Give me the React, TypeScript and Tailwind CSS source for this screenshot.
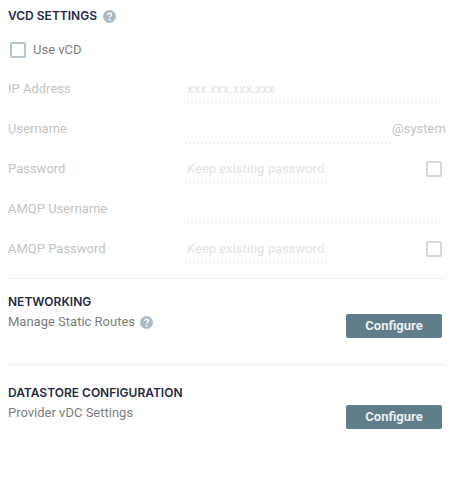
function Help() {
  return (
    <svg width="13" height="13" viewBox="0 0 13 13" className="shrink-0">
      <circle cx="6.5" cy="6.5" r="6.5" fill="#a9bcc6" />
      <path d="M4.6 5.1c0-1.1.8-1.8 1.9-1.8s1.9.7 1.9 1.6c0 1.400-1.800 1.400-1.800 2.700" fill="none" stroke="#fff" strokeWidth="1.4" />
      <circle cx="6.600" cy="9.700" r="0.900" fill="#fff" />
    </svg>
  );
}

function Row({ label, placeholder, inputW, check, suffix }: { label: string; placeholder?: string; inputW: string; check?: boolean; suffix?: string }) {
  return (
    <div className="flex h-10 items-start">
      <div className="w-[176px] pt-[7px] text-[13px] leading-[18px] text-[#c4c4c4]">{label}</div>
      <div className={`${inputW} h-[30px] bg-[linear-gradient(to_right,#c8c8c8_1px,transparent_1px)] bg-[length:4px_1px] bg-bottom bg-repeat-x pl-[3px] pt-[7px] text-[13px] leading-[18px] text-[#e4e4e4]`}>{placeholder}</div>
      {suffix && <div className="pl-[2px] pt-[7px] text-[13px] leading-[18px] text-[#c4c4c4]">{suffix}</div>}
      {check && <div className="ml-auto mr-[4px] mt-[8px] h-4 w-4 rounded-[2px] border-2 border-[#d8d8d8]" />}
    </div>
  );
}

function Section({ title, text, help }: { title: string; text: string; help?: boolean }) {
  return (
    <div className="flex items-start justify-between pr-[4px]">
      <div>
        <div className="text-[12px] leading-[18px] font-semibold text-[#252a41] font-['Inter',sans-serif]">{title}</div>
        <div className="mt-[2px] flex items-center gap-[5px] text-[13px] leading-[18px] text-[#7d7d7d]">
          {text}
          {help && <Help />}
        </div>
      </div>
      <button className="mt-[21px] h-6 w-24 rounded-[2px] bg-[#607d8b] text-[13px] font-bold text-[#eceff1]">Configure</button>
    </div>
  );
}

export default function App() {
  return (
    <div className="h-[494px] w-[454px] bg-white px-2 pt-[7px] font-['Roboto',sans-serif]">
      <div className="flex items-center gap-[6px] text-[12px] leading-[18px] font-semibold text-[#252a41] font-['Inter',sans-serif]">
        VCD SETTINGS <Help />
      </div>
      <div className="mt-[17px] flex h-4 items-center pl-[2px]">
        <div className="h-4 w-4 rounded-[2px] border-2 border-[#b4c6cf]" />
        <span className="ml-[7px] text-[13px] text-[#7d7d7d]">Use vCD</span>
      </div>
      <div className="mt-[15px]">
        <Row label="IP Address" placeholder="xxx.xxx.xxx.xxx" inputW="w-[259px]" />
        <Row label="Username" inputW="w-[206px]" suffix="@system" />
        <Row label="Password" placeholder="Keep existing password" inputW="w-[143px]" check />
        <Row label="AMQP Username" inputW="w-[259px]" />
        <Row label="AMQP Password" placeholder="Keep existing password" inputW="w-[143px]" check />
      </div>
      <div className="mt-[5px] border-t border-[#ebebeb] pt-[14px]">
        <Section title="NETWORKING" text="Manage Static Routes" help />
      </div>
      <div className="mt-[26px] border-t border-[#ebebeb] pt-[19px]">
        <Section title="DATASTORE CONFIGURATION" text="Provider vDC Settings" />
      </div>
    </div>
  );
}
